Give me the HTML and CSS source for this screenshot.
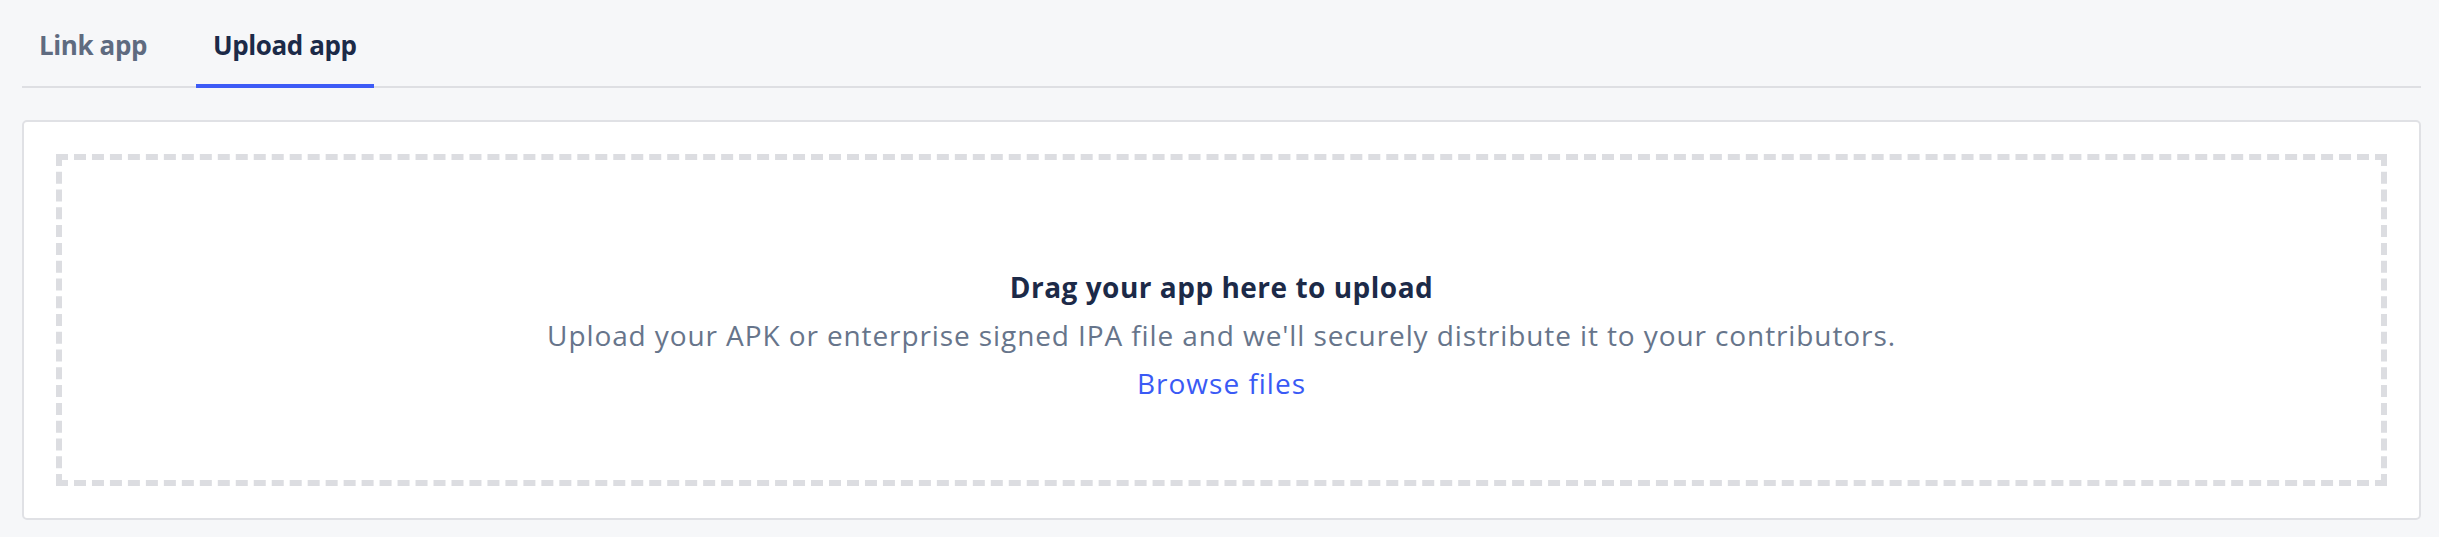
FILE: index.html
```html
<!DOCTYPE html>
<html lang="en">
<head>
<meta charset="utf-8">
<title>Upload app</title>
<link rel="stylesheet" href="styles.css">
</head>
<body>
<div class="page">
  <nav class="tabs">
    <a class="tab">Link app</a>
    <a class="tab tab-active">Upload app</a>
  </nav>
  <section class="card">
    <div class="dropzone">
      <h2 class="drop-title">Drag your app here to upload</h2>
      <p class="drop-text">Upload your APK or enterprise signed IPA file and we'll securely distribute it to your contributors.</p>
      <a class="browse">Browse files</a>
    </div>
  </section>
</div>
</body>
</html>
```

FILE: styles.css
```css
* { box-sizing: border-box; }
html, body {
  margin: 0;
  padding: 0;
  background: #f6f7f9;
  font-family: "Open Sans", "Lato", sans-serif;
}
.page {
  padding: 0 18px 0 22px;
}
.tabs {
  display: flex;
  gap: 32px;
  border-bottom: 2px solid #dedfe3;
}
.tab {
  display: block;
  padding: 28px 17px 22px;
  font-size: 26px;
  line-height: 34px;
  font-weight: 700;
  letter-spacing: -0.4px;
  color: #5f6b80;
  border-bottom: 4px solid transparent;
  margin-bottom: -2px;
}
.tab-active {
  color: #1c2a48;
  border-bottom-color: #3d5bf6;
}
.card {
  margin-top: 32px;
  background: #ffffff;
  border: 2px solid #e0e1e5;
  border-radius: 5px;
  padding: 32px;
}
.dropzone {
  height: 332px;
  border: 6px dashed #dcdde1;
  padding-top: 103px;
  text-align: center;
}
.drop-title {
  margin: 0;
  font-size: 28px;
  line-height: 48px;
  font-weight: 700;
  letter-spacing: 0.5px;
  color: #1c2a48;
}
.drop-text {
  margin: 0;
  font-size: 28px;
  line-height: 48px;
  font-weight: 400;
  letter-spacing: 0.9px;
  color: #67758b;
}
.browse {
  display: inline-block;
  font-size: 28px;
  line-height: 48px;
  letter-spacing: 1px;
  color: #3a5af5;
  text-decoration: none;
}
```
